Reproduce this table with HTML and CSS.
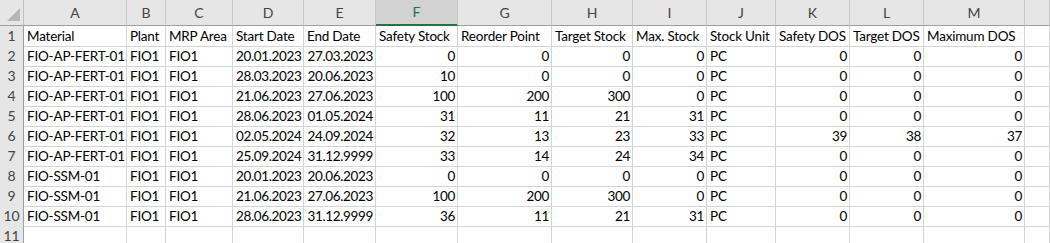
FILE: index.html
```html
<!DOCTYPE html>
<html>
<head>
<meta charset="utf-8">
<link rel="stylesheet" href="styles.css">
</head>
<body>
<div class="sheet">
  <div class="row head">
    <div class="corner"><span class="tri"></span></div>
    <div class="ch">A</div><div class="ch">B</div><div class="ch">C</div><div class="ch">D</div><div class="ch">E</div><div class="ch sel">F</div><div class="ch">G</div><div class="ch">H</div><div class="ch">I</div><div class="ch">J</div><div class="ch">K</div><div class="ch">L</div><div class="ch">M</div><div class="ch"></div>
  </div>
  <div class="row">
    <div class="rh">1</div>
    <div class="c">Material</div><div class="c">Plant</div><div class="c">MRP Area</div><div class="c">Start Date</div><div class="c">End Date</div><div class="c">Safety Stock</div><div class="c">Reorder Point</div><div class="c">Target Stock</div><div class="c">Max. Stock</div><div class="c">Stock Unit</div><div class="c">Safety DOS</div><div class="c">Target DOS</div><div class="c">Maximum DOS</div><div class="c"></div>
  </div>
  <div class="row">
    <div class="rh">2</div>
    <div class="c">FIO-AP-FERT-01</div><div class="c">FIO1</div><div class="c">FIO1</div><div class="c n">20.01.2023</div><div class="c n">27.03.2023</div><div class="c n">0</div><div class="c n">0</div><div class="c n">0</div><div class="c n">0</div><div class="c">PC</div><div class="c n">0</div><div class="c n">0</div><div class="c n">0</div><div class="c"></div>
  </div>
  <div class="row">
    <div class="rh">3</div>
    <div class="c">FIO-AP-FERT-01</div><div class="c">FIO1</div><div class="c">FIO1</div><div class="c n">28.03.2023</div><div class="c n">20.06.2023</div><div class="c n">10</div><div class="c n">0</div><div class="c n">0</div><div class="c n">0</div><div class="c">PC</div><div class="c n">0</div><div class="c n">0</div><div class="c n">0</div><div class="c"></div>
  </div>
  <div class="row">
    <div class="rh">4</div>
    <div class="c">FIO-AP-FERT-01</div><div class="c">FIO1</div><div class="c">FIO1</div><div class="c n">21.06.2023</div><div class="c n">27.06.2023</div><div class="c n">100</div><div class="c n">200</div><div class="c n">300</div><div class="c n">0</div><div class="c">PC</div><div class="c n">0</div><div class="c n">0</div><div class="c n">0</div><div class="c"></div>
  </div>
  <div class="row">
    <div class="rh">5</div>
    <div class="c">FIO-AP-FERT-01</div><div class="c">FIO1</div><div class="c">FIO1</div><div class="c n">28.06.2023</div><div class="c n">01.05.2024</div><div class="c n">31</div><div class="c n">11</div><div class="c n">21</div><div class="c n">31</div><div class="c">PC</div><div class="c n">0</div><div class="c n">0</div><div class="c n">0</div><div class="c"></div>
  </div>
  <div class="row">
    <div class="rh">6</div>
    <div class="c">FIO-AP-FERT-01</div><div class="c">FIO1</div><div class="c">FIO1</div><div class="c n">02.05.2024</div><div class="c n">24.09.2024</div><div class="c n">32</div><div class="c n">13</div><div class="c n">23</div><div class="c n">33</div><div class="c">PC</div><div class="c n">39</div><div class="c n">38</div><div class="c n">37</div><div class="c"></div>
  </div>
  <div class="row">
    <div class="rh">7</div>
    <div class="c">FIO-AP-FERT-01</div><div class="c">FIO1</div><div class="c">FIO1</div><div class="c n">25.09.2024</div><div class="c n">31.12.9999</div><div class="c n">33</div><div class="c n">14</div><div class="c n">24</div><div class="c n">34</div><div class="c">PC</div><div class="c n">0</div><div class="c n">0</div><div class="c n">0</div><div class="c"></div>
  </div>
  <div class="row">
    <div class="rh">8</div>
    <div class="c">FIO-SSM-01</div><div class="c">FIO1</div><div class="c">FIO1</div><div class="c n">20.01.2023</div><div class="c n">20.06.2023</div><div class="c n">0</div><div class="c n">0</div><div class="c n">0</div><div class="c n">0</div><div class="c">PC</div><div class="c n">0</div><div class="c n">0</div><div class="c n">0</div><div class="c"></div>
  </div>
  <div class="row">
    <div class="rh">9</div>
    <div class="c">FIO-SSM-01</div><div class="c">FIO1</div><div class="c">FIO1</div><div class="c n">21.06.2023</div><div class="c n">27.06.2023</div><div class="c n">100</div><div class="c n">200</div><div class="c n">300</div><div class="c n">0</div><div class="c">PC</div><div class="c n">0</div><div class="c n">0</div><div class="c n">0</div><div class="c"></div>
  </div>
  <div class="row">
    <div class="rh">10</div>
    <div class="c">FIO-SSM-01</div><div class="c">FIO1</div><div class="c">FIO1</div><div class="c n">28.06.2023</div><div class="c n">31.12.9999</div><div class="c n">36</div><div class="c n">11</div><div class="c n">21</div><div class="c n">31</div><div class="c">PC</div><div class="c n">0</div><div class="c n">0</div><div class="c n">0</div><div class="c"></div>
  </div>
  <div class="row">
    <div class="rh">11</div>
    <div class="c"></div><div class="c"></div><div class="c"></div><div class="c"></div><div class="c"></div><div class="c"></div><div class="c"></div><div class="c"></div><div class="c"></div><div class="c"></div><div class="c"></div><div class="c"></div><div class="c"></div><div class="c"></div>
  </div>
</div>
</body>
</html>
```

FILE: styles.css
```css
html, body {
  margin: 0;
  padding: 0;
  background: #ffffff;
  overflow: hidden;
}
.sheet {
  width: 1050px;
  font-family: Lato, "Liberation Sans", sans-serif;
  font-size: 13.5px;
  letter-spacing: -0.2px;
  color: #000;
}
.row {
  display: grid;
  grid-template-columns: 24px 103px 39px 67px 71px 72px 82px 94px 81px 74px 69px 74px 74px 101px 1fr;
  height: 20px;
}
.row.head {
  height: 26px;
}
.corner {
  background: #e6e6e6;
  border-right: 1px solid #bfbfbf;
  border-bottom: 1px solid #9e9e9e;
  position: relative;
}
.tri {
  position: absolute;
  right: 3px;
  bottom: 4px;
  width: 0;
  height: 0;
  border-left: 13px solid transparent;
  border-bottom: 13px solid #b5b5b5;
}
.ch {
  background: #e6e6e6;
  color: #444;
  border-right: 1px solid #c8c8c8;
  border-bottom: 1px solid #9e9e9e;
  text-align: center;
  line-height: 25px;
  font-size: 14px;
  letter-spacing: 0;
}
.ch.sel {
  background: #d2d2d2;
  color: #217346;
  border-bottom: 2px solid #217346;
  line-height: 24px;
}
.rh {
  background: #e6e6e6;
  color: #444;
  border-right: 1px solid #9e9e9e;
  border-bottom: 1px solid #c8c8c8;
  text-align: center;
  line-height: 20px;
  font-size: 14px;
  letter-spacing: 0;
}
.c {
  border-right: 1px solid #d4d4d4;
  border-bottom: 1px solid #d4d4d4;
  padding: 0 2px 0 3px;
  line-height: 20px;
  white-space: nowrap;
  overflow: hidden;
}
.c.n {
  text-align: right;
  letter-spacing: -0.35px;
}
```
